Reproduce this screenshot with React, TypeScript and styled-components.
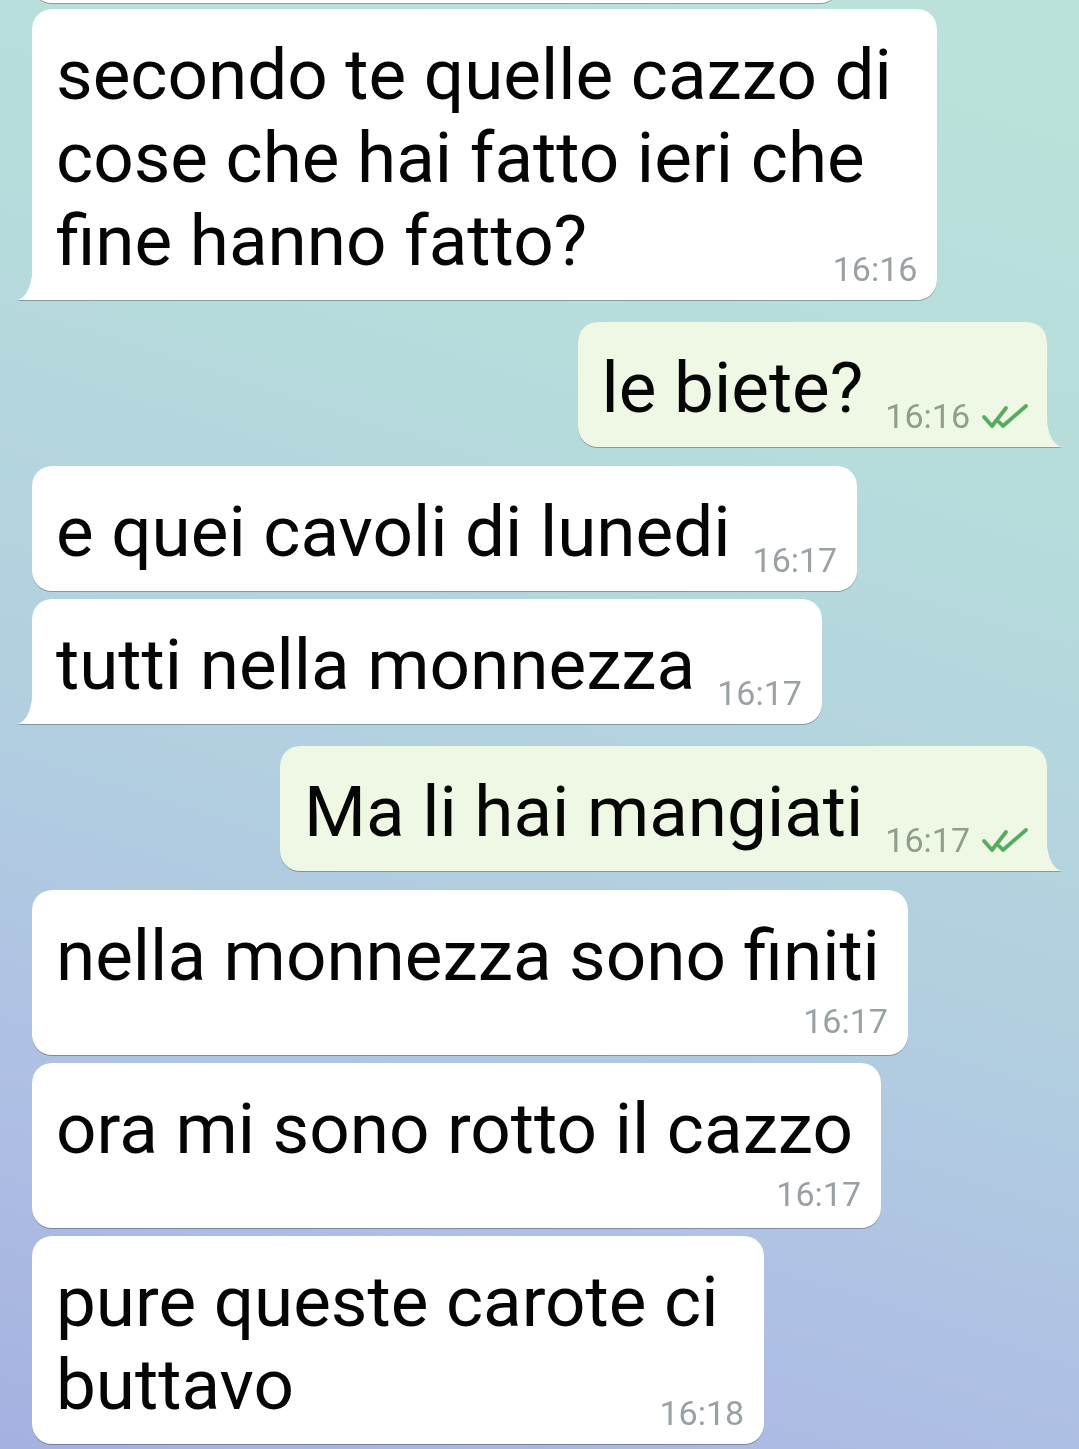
import React from "react";
import styled, { createGlobalStyle, css } from "styled-components";

const GlobalStyle = createGlobalStyle`
    html, body {
        margin: 0;
        padding: 0;
    }
    body {
        font-family: Roboto, "Noto Sans", "Liberation Sans", sans-serif;
        background: #b5d6de;
    }
`;

type Layout = "inline" | "below" | "overlay";

type Message = {
    lines: string[];
    time: string;
    out?: boolean;
    tail?: boolean;
    layout: Layout;
};

const messages: Message[] = [
    {
        lines: ["secondo te quelle cazzo di ", "cose che hai fatto ieri che ", "fine hanno fatto?"],
        time: "16:16",
        tail: true,
        layout: "overlay",
    },
    { lines: ["le biete?"], time: "16:16", out: true, tail: true, layout: "inline" },
    { lines: ["e quei cavoli di lunedi"], time: "16:17", layout: "inline" },
    { lines: ["tutti nella monnezza"], time: "16:17", tail: true, layout: "inline" },
    { lines: ["Ma li hai mangiati"], time: "16:17", out: true, tail: true, layout: "inline" },
    { lines: ["nella monnezza sono finiti"], time: "16:17", layout: "below" },
    { lines: ["ora mi sono rotto il cazzo"], time: "16:17", layout: "below" },
    { lines: ["pure queste carote ci ", "buttavo"], time: "16:18", layout: "overlay" },
];

const Screen = styled.div`
    min-height: 1449px;
    box-sizing: border-box;
    padding: 0 32px 8px;
    display: flex;
    flex-direction: column;
    overflow: hidden;
    background: linear-gradient(198deg, #bbe3da 0%, #b6dcdc 30%, #b2cfe0 58%, #aebfe4 80%, #a5b1e1 100%);
`;

const Peek = styled.div`
    align-self: flex-start;
    width: 808px;
    height: 40px;
    margin-top: -37px;
    background: #fff;
    border-radius: 20px;
    filter: drop-shadow(0 1px 0.6px rgba(0, 0, 0, 0.28));
`;

const Bubble = styled.div<{ $out: boolean; $tail: boolean; $gap: number; $layout: Layout }>`
    position: relative;
    align-self: ${(p) => (p.$out ? "flex-end" : "flex-start")};
    margin-top: ${(p) => p.$gap}px;
    padding: 24px ${(p) => (p.$out ? 18 : 20)}px 18px 24px;
    background: ${(p) => (p.$out ? "#eff8e4" : "#ffffff")};
    border-radius: 20px;
    ${(p) =>
        p.$tail &&
        (p.$out ? "border-bottom-right-radius: 0;" : "border-bottom-left-radius: 0;")}
    filter: drop-shadow(0 1px 0.6px rgba(0, 0, 0, 0.28));
    display: grid;

    ${(p) =>
        p.$layout === "inline" &&
        css`
            grid-template-columns: auto auto;
        `}
    ${(p) =>
        p.$layout === "below" &&
        css`
            grid-template-rows: auto auto;
        `}
`;

const Text = styled.div<{ $layout: Layout }>`
    font-size: 71px;
    line-height: 83px;
    color: #050505;
    white-space: pre;
    margin-right: ${(p) => (p.$layout === "inline" ? 0 : 8)}px;
    ${(p) => p.$layout === "overlay" && "grid-area: 1 / 1;"}
`;

const Meta = styled.div<{ $out: boolean; $layout: Layout }>`
    display: flex;
    align-items: flex-end;
    gap: 11px;
    font-size: 34px;
    line-height: 32px;
    color: ${(p) => (p.$out ? "#8f9e8d" : "#9aa1a5")};
    justify-self: end;
    align-self: end;
    white-space: nowrap;

    ${(p) =>
        p.$layout === "inline" &&
        css`
            margin-left: 22px;
            margin-bottom: -3px;
        `}
    ${(p) =>
        p.$layout === "below" &&
        css`
            margin-top: 8px;
        `}
    ${(p) =>
        p.$layout === "overlay" &&
        css`
            grid-area: 1 / 1;
            margin-bottom: -3px;
        `}
`;

const Checks = styled.svg`
    width: 48px;
    height: 25px;
    margin-bottom: 3px;
    flex-shrink: 0;
`;

const Tail = styled.svg<{ $out: boolean }>`
    position: absolute;
    bottom: 0;
    width: 16px;
    height: 30px;
    ${(p) => (p.$out ? "right: -16px;" : "left: -16px;")}
`;

const DoubleCheck = () => (
    <Checks viewBox="0 0 48 25" fill="none" stroke="#55ab5e" strokeWidth="3.8" strokeLinecap="round" strokeLinejoin="round">
        <path d="M3 13 L11 22 L25 4" />
        <path d="M18 18 L22 22 L45 2" />
    </Checks>
);

const BubbleTail: React.FC<{ out: boolean }> = ({ out }) => (
    <Tail $out={out} viewBox="0 0 16 30" preserveAspectRatio="none">
        {out ? (
            <path d="M16 30 A16 30 0 0 1 0 0 L0 30 Z" fill="#eff8e4" />
        ) : (
            <path d="M0 30 A16 30 0 0 0 16 0 L16 30 Z" fill="#ffffff" />
        )}
    </Tail>
);

export default function App() {
    return (
        <>
            <GlobalStyle />
            <Screen>
                <Peek />
                {messages.map((m, i) => {
                    const prev = messages[i - 1];
                    const out = !!m.out;
                    const gap = i === 0 ? 6 : !!prev.out === out ? 8 : out ? 22 : 19;
                    return (
                        <Bubble key={i} $out={out} $tail={!!m.tail} $gap={gap} $layout={m.layout}>
                            <Text $layout={m.layout}>
                                {m.lines.map((l, j) => (
                                    <div key={j}>{l}</div>
                                ))}
                            </Text>
                            <Meta $out={out} $layout={m.layout}>
                                <span>{m.time}</span>
                                {out && <DoubleCheck />}
                            </Meta>
                            {m.tail && <BubbleTail out={out} />}
                        </Bubble>
                    );
                })}
            </Screen>
        </>
    );
}
